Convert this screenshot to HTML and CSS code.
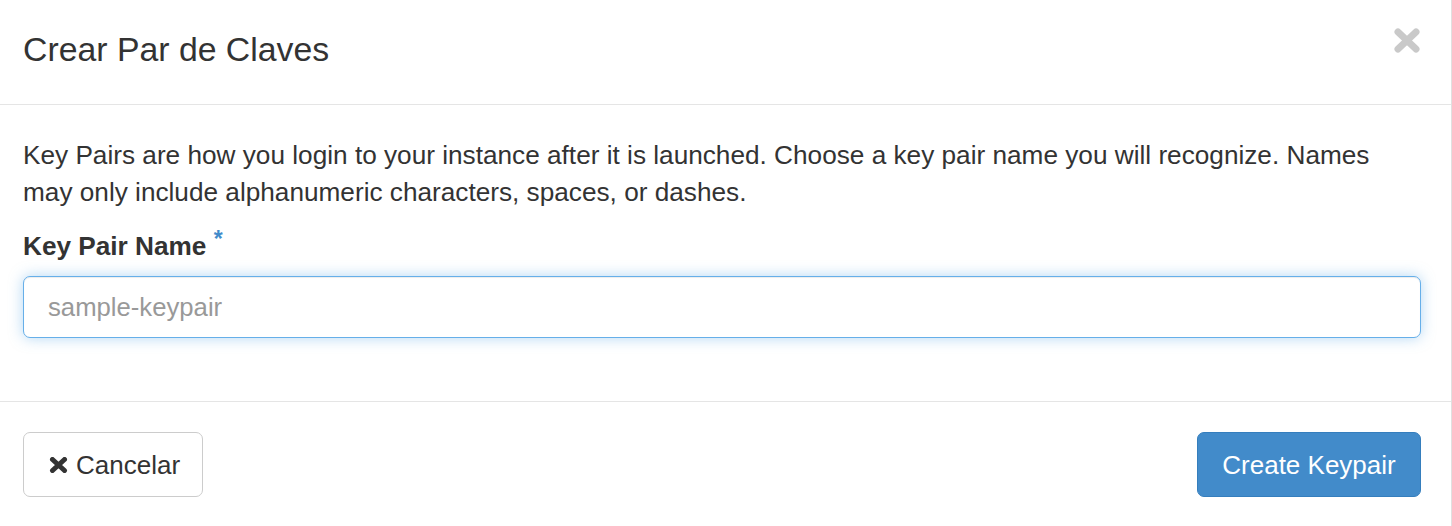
FILE: index.html
```html
<!DOCTYPE html>
<html lang="es">
<head>
<meta charset="utf-8">
<title>Crear Par de Claves</title>
<link rel="stylesheet" href="styles.css">
</head>
<body>
<div class="modal">
  <div class="modal-header">
    <h4 class="modal-title">Crear Par de Claves</h4>
    <button class="close" type="button" aria-label="Close">
      <svg width="28" height="27" viewBox="0 0 28 27"><path d="M5 5 L23 22 M23 5 L5 22" stroke="#c9c9c9" stroke-width="7" stroke-linecap="round" fill="none"/></svg>
    </button>
  </div>
  <div class="modal-body">
    <p class="help">Key Pairs are how you login to your instance after it is launched. Choose a key pair name you will recognize. Names may only include alphanumeric characters, spaces, or dashes.</p>
    <label class="field-label" for="kp">Key Pair Name <span class="req">*</span></label>
    <input id="kp" class="form-control" type="text" placeholder="sample-keypair">
  </div>
  <div class="modal-footer">
    <button class="btn btn-default" type="button">
      <svg class="icon-times" width="19" height="16" viewBox="0 0 19 16"><path d="M3.5 2.5 L15.5 13.5 M15.5 2.5 L3.5 13.5" stroke="#333" stroke-width="5" stroke-linecap="round" fill="none"/></svg>
      <span>Cancelar</span>
    </button>
    <button class="btn btn-primary" type="button">Create Keypair</button>
  </div>
</div>
</body>
</html>
```

FILE: styles.css
```css
* { box-sizing: border-box; }

html, body {
  margin: 0;
  padding: 0;
  background: #ffffff;
}

body {
  font-family: "Liberation Sans", Arial, Helvetica, sans-serif;
  color: #333333;
  font-size: 26.2px;
  line-height: 36.7px;
}

.modal {
  width: 1452px;
  height: 526px;
  border-right: 1px solid #e0e0e0;
  background: #ffffff;
  display: flex;
  flex-direction: column;
}

.modal-header {
  height: 105px;
  padding: 26px 30px 0 23px;
  border-bottom: 1px solid #e5e5e5;
  display: flex;
  justify-content: space-between;
  align-items: flex-start;
}

.modal-title {
  margin: 0;
  font-size: 33.8px;
  line-height: 47px;
  font-weight: normal;
  color: #333333;
}

.close {
  border: 0;
  background: transparent;
  padding: 0;
  margin: 1px 0 0 0;
  width: 28px;
  height: 27px;
  cursor: pointer;
  display: block;
}

.close svg { display: block; }

.modal-body {
  height: 296px;
  padding: 32px 30px 0 23px;
  display: flex;
  flex-direction: column;
  align-items: stretch;
}

.help {
  margin: 0 0 11px 0;
}

.field-label {
  display: block;
  font-weight: bold;
  margin: 0 0 11px 0;
}

.req {
  color: #428bca;
  font-size: 23px;
  vertical-align: 8px;
  font-weight: bold;
}

.form-control {
  display: block;
  width: 100%;
  height: 62px;
  padding: 0 24px;
  font-family: inherit;
  font-size: 25.7px;
  color: #555555;
  border: 1.5px solid #66afe9;
  border-radius: 7px;
  outline: none;
  box-shadow: inset 0 1px 1px rgba(0,0,0,0.075), 0 0 14px rgba(102,175,233,0.5);
  background: #ffffff;
}

.form-control::placeholder {
  color: #999999;
}

.modal-footer {
  flex: 1;
  border-top: 1px solid #e5e5e5;
  padding: 30px 30px 0 23px;
  display: flex;
  justify-content: space-between;
  align-items: flex-start;
}

.btn {
  height: 65px;
  border-radius: 7px;
  font-family: inherit;
  font-size: 26px;
  line-height: 36px;
  display: inline-flex;
  align-items: center;
  cursor: pointer;
}

.btn-default {
  width: 180px;
  padding: 0 0 0 25px;
  background: #ffffff;
  color: #333333;
  border: 1.5px solid #cccccc;
  gap: 8px;
}

.icon-times { display: block; }

.btn-primary {
  width: 224px;
  justify-content: center;
  padding: 0;
  background: #428bca;
  border: 1.5px solid #357ebd;
  color: #ffffff;
}
```
